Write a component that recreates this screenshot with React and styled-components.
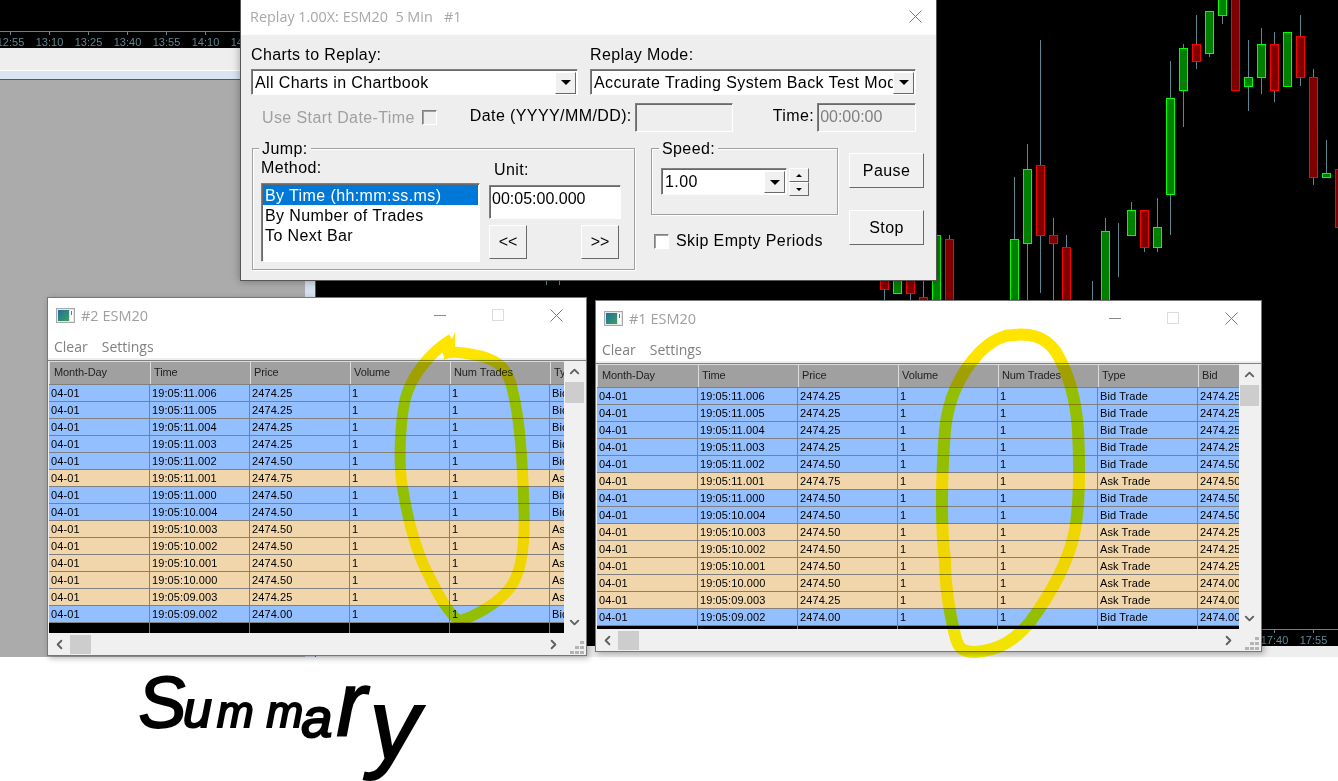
import React from 'react'
import styled, { createGlobalStyle } from 'styled-components'
import { ChevronUp, ChevronDown, ChevronLeft, ChevronRight } from 'lucide-react'

const GlobalStyle = createGlobalStyle`
    html, body {
        margin: 0;
        padding: 0;
        background: #fff;
    }
    body {
        font-family: "Liberation Sans", Arial, sans-serif;
    }
`

const WICK = '#5d8791'
const INK = '#ffe400'

const CANDLES = [
    { i: -30, wick: [278, 285] },
    { i: -29, wick: [278, 285] },
    { i: -4, body: [270, 290], wick: [270, 310] },
    { i: -3, body: [270, 294], up: true },
    { i: -2, body: [270, 294], wick: [270, 310] },
    { i: -1, body: [297, 310], wick: [270, 310] },
    { i: 0, body: [235, 310], wick: [231, 310], up: true },
    { i: 1, body: [239, 310], wick: [235, 310] },
    { i: 6, body: [239, 310], wick: [177, 310], up: true },
    { i: 7, body: [169, 244], wick: [144, 310], up: true },
    { i: 8, body: [165, 236], wick: [40, 293] },
    { i: 9, body: [235, 244], wick: [218, 310] },
    { i: 10, body: [247, 310], wick: [235, 310] },
    { i: 12, wick: [281, 310] },
    { i: 13, body: [231, 310], wick: [218, 310], up: true },
    { i: 14, body: [231, 231], wick: [223, 277], up: true },
    { i: 15, body: [210, 236], wick: [202, 236], up: true },
    { i: 16, body: [210, 248], wick: [210, 252] },
    { i: 17, body: [227, 248], wick: [198, 252], up: true },
    { i: 18, body: [98, 195], wick: [61, 235], up: true },
    { i: 19, body: [48, 91], wick: [44, 127], up: true },
    { i: 20, body: [44, 62], wick: [15, 69] },
    { i: 21, body: [11, 54], wick: [11, 57], up: true },
    { i: 22, body: [-3, 16], wick: [-3, 24], up: true },
    { i: 23, body: [-3, 91] },
    { i: 24, body: [77, 87], wick: [40, 111], up: true },
    { i: 25, body: [44, 78], wick: [28, 94], up: true },
    { i: 26, body: [44, 91], wick: [32, 102] },
    { i: 27, body: [32, 87], up: true },
    { i: 28, body: [36, 78], wick: [15, 86] },
    { i: 29, body: [77, 178], wick: [69, 185] },
    { i: 30, body: [173, 178], wick: [140, 178], up: true },
    { i: 31, body: [169, 228] },
]

const BID = 'Bid Trade'
const ASK = 'Ask Trade'

const TRADES = [
    ['19:05:11.006', '2474.25', BID, '2474.25'],
    ['19:05:11.005', '2474.25', BID, '2474.25'],
    ['19:05:11.004', '2474.25', BID, '2474.25'],
    ['19:05:11.003', '2474.25', BID, '2474.25'],
    ['19:05:11.002', '2474.50', BID, '2474.50'],
    ['19:05:11.001', '2474.75', ASK, '2474.50'],
    ['19:05:11.000', '2474.50', BID, '2474.50'],
    ['19:05:10.004', '2474.50', BID, '2474.50'],
    ['19:05:10.003', '2474.50', ASK, '2474.25'],
    ['19:05:10.002', '2474.50', ASK, '2474.25'],
    ['19:05:10.001', '2474.50', ASK, '2474.25'],
    ['19:05:10.000', '2474.50', ASK, '2474.00'],
    ['19:05:09.003', '2474.25', ASK, '2474.00'],
    ['19:05:09.002', '2474.00', BID, '2474.00'],
]

const COLUMNS = ['Month-Day', 'Time', 'Price', 'Volume', 'Num Trades', 'Type', 'Bid']

// handwritten note at the bottom, one size and offset per letter
const SCRIPT = [
    { ch: 'S', size: 72, dx: 0, dy: 0, rot: -3 },
    { ch: 'u', size: 52, dx: -3, dy: 0, rot: 0 },
    { ch: 'm', size: 44, dx: 5, dy: 0, rot: 0 },
    { ch: 'm', size: 44, dx: 13, dy: 0, rot: 0 },
    { ch: 'a', size: 56, dx: -2, dy: 10, rot: 0 },
    { ch: 'r', size: 90, dx: 4, dy: 8, rot: 0 },
    { ch: 'y', size: 100, dx: 3, dy: 32, rot: 0 },
]

function ChartCandles() {
    return CANDLES.map(({ i, body, wick, up }) => {
        const cx = 936.5 + 13 * i
        return (
            <g key={i}>
                {wick && <rect x={cx - 0.5} y={wick[0]} width="1" height={wick[1] - wick[0]} fill={WICK} />}
                {body && (
                    <rect
                        x={cx - 4}
                        y={body[0] + 0.5}
                        width="8"
                        height={Math.max(body[1] - body[0] - 1, 0)}
                        fill={up ? '#008000' : '#800000'}
                        stroke={up ? '#00ff00' : '#ff0000'}
                        strokeWidth="1"
                    />
                )}
            </g>
        )
    })
}

function AxisTick({ x, y, label }) {
    return (
        <>
            <rect x={x} y={y} width="1" height="4" fill={WICK} />
            <text x={x + 0.5} y={y + 15} fill={WICK} fontSize="11" textAnchor="middle" fontFamily="Liberation Sans">
                {label}
            </text>
        </>
    )
}

function CloseIcon({ color = '#7a7a7a' }) {
    return (
        <svg width="13" height="13" viewBox="0 0 13 13">
            <path d="M0.5 0.5 L12.5 12.5 M12.5 0.5 L0.5 12.5" stroke={color} strokeWidth="1" fill="none" />
        </svg>
    )
}

function WindowIcon() {
    return (
        <svg width="19" height="15" viewBox="0 0 19 15">
            <defs>
                <linearGradient id="winIconFill" x1="0" y1="0" x2="1" y2="1">
                    <stop offset="0" stopColor="#1f6f9f" />
                    <stop offset="1" stopColor="#3f9f5f" />
                </linearGradient>
            </defs>
            <rect x="0.5" y="0.5" width="18" height="14" fill="#e6e6e6" stroke="#a8a8a8" />
            <rect x="2" y="2" width="11" height="11" fill="url(#winIconFill)" />
            <rect x="14" y="2" width="3" height="11" fill="#ffffff" />
            <rect x="15" y="3" width="1" height="4" fill="#2f8f7f" />
        </svg>
    )
}

function Grip() {
    return (
        <svg width="14" height="13" viewBox="0 0 14 13">
            <g fill="#b4b4b4">
                <rect x="10" y="0" width="4" height="3" />
                <rect x="5" y="5" width="4" height="3" />
                <rect x="10" y="5" width="4" height="3" />
                <rect x="0" y="10" width="4" height="3" />
                <rect x="5" y="10" width="4" height="3" />
                <rect x="10" y="10" width="4" height="3" />
            </g>
        </svg>
    )
}

function TradeWindow({ title, left, top, width, height, columns }) {
    return (
        <Window $left={left} $top={top} $width={width} $height={height}>
            <TitleBar>
                <WindowIcon />
                <WindowTitle>{title}</WindowTitle>
                <WindowControls>
                    <Minimize />
                    <Maximize />
                    <CloseIcon />
                </WindowControls>
            </TitleBar>
            <MenuBar>
                <MenuItem>Clear</MenuItem>
                <MenuItem>Settings</MenuItem>
            </MenuBar>
            <WindowBody>
                <TableArea>
                    <Table>
                        <HeaderRow>
                            {columns.map((c) => <HeaderCell key={c}>{c}</HeaderCell>)}
                        </HeaderRow>
                        {TRADES.map(([time, price, type, bid]) => (
                            <Row key={time} $ask={type === ASK}>
                                {['04-01', time, price, '1', '1', type, bid].slice(0, columns.length).map((v, n) => (
                                    <Cell key={n}>{v}</Cell>
                                ))}
                            </Row>
                        ))}
                        <EmptyRow>
                            {columns.map((c) => <EmptyCell key={c} />)}
                        </EmptyRow>
                    </Table>
                    <VScroll>
                        <ScrollArrow><ChevronUp size={15} strokeWidth={3} /></ScrollArrow>
                        <VThumb />
                        <ScrollSpace />
                        <ScrollArrow><ChevronDown size={15} strokeWidth={3} /></ScrollArrow>
                    </VScroll>
                </TableArea>
                <HScroll>
                    <ScrollArrow><ChevronLeft size={15} strokeWidth={3} /></ScrollArrow>
                    <HThumb />
                    <ScrollSpace />
                    <ScrollArrow><ChevronRight size={15} strokeWidth={3} /></ScrollArrow>
                    <GripCorner><Grip /></GripCorner>
                </HScroll>
            </WindowBody>
        </Window>
    )
}

export default function App() {
    return (
        <Desktop>
            <GlobalStyle />
            <Backdrop>
                <LeftPanel>
                    <AxisStrip>
                        <svg width="316" height="48" viewBox="0 0 316 48">
                            <rect x="0" y="31" width="316" height="1" fill={WICK} />
                            {['12:55', '13:10', '13:25', '13:40', '13:55', '14:10', '14:25'].map((t, n) => (
                                <AxisTick key={t} x={10 + 39 * n} y={31} label={t} />
                            ))}
                        </svg>
                    </AxisStrip>
                    <ToolStrip />
                    <TabStrip />
                    <GrayRow>
                        <GrayArea />
                        <BlueEdge />
                    </GrayRow>
                </LeftPanel>
                <ChartPanel>
                    <svg width="1022" height="646" viewBox="316 0 1022 646">
                        <ChartCandles />
                        <rect x="1100" y="629" width="238" height="1" fill={WICK} />
                        <AxisTick x={1274} y={629} label="17:40" />
                        <AxisTick x={1313} y={629} label="17:55" />
                    </svg>
                    <ChartFooter />
                </ChartPanel>
            </Backdrop>

            <Dialog>
                <DialogTitle>
                    <DialogCaption>{'Replay 1.00X: ESM20  5 Min   #1'}</DialogCaption>
                    <CloseIcon />
                </DialogTitle>
                <DialogBody>
                    <FieldRow>
                        <Field $width={327}>
                            <Label>Charts to Replay:</Label>
                            <Combo>
                                <ComboText>All Charts in Chartbook</ComboText>
                                <DropButton><Arrow /></DropButton>
                            </Combo>
                        </Field>
                        <Field $width={326}>
                            <Label>Replay Mode:</Label>
                            <Combo>
                                <ComboText>Accurate Trading System Back Test Mode</ComboText>
                                <DropButton><Arrow /></DropButton>
                            </Combo>
                        </Field>
                    </FieldRow>
                    <DateRow>
                        <DisabledLabel>Use Start Date-Time</DisabledLabel>
                        <CheckBox $disabled $left={7} />
                        <RaisedLabel $left={33}>Date (YYYY/MM/DD):</RaisedLabel>
                        <TextBox $disabled $width={98} $left={3} />
                        <RaisedLabel $left={40}>Time:</RaisedLabel>
                        <TextBox $disabled $width={99} $left={3}>00:00:00</TextBox>
                    </DateRow>
                    <ControlsRow>
                        <Group $width={383} $height={122} $left={1}>
                            <GroupLegend $left={6}>Jump:</GroupLegend>
                            <MethodColumn>
                                <Label>Method:</Label>
                                <ListBox>
                                    <ListItem $selected>By Time (hh:mm:ss.ms)</ListItem>
                                    <ListItem>By Number of Trades</ListItem>
                                    <ListItem>To Next Bar</ListItem>
                                </ListBox>
                            </MethodColumn>
                            <UnitColumn>
                                <UnitLabel>Unit:</UnitLabel>
                                <TextBox $width={132} $height={34}>00:05:00.000</TextBox>
                                <JumpButtons>
                                    <SmallButton>{'<<'}</SmallButton>
                                    <SmallButton>{'>>'}</SmallButton>
                                </JumpButtons>
                            </UnitColumn>
                        </Group>
                        <SpeedColumn>
                            <Group $width={187} $height={67}>
                                <GroupLegend $left={7}>Speed:</GroupLegend>
                                <SpeedRow>
                                    <SpeedCombo>
                                        <ComboText>1.00</ComboText>
                                        <DropButton><Arrow /></DropButton>
                                    </SpeedCombo>
                                    <Spinner>
                                        <SpinButton><SmallArrow $up /></SpinButton>
                                        <SpinButton><SmallArrow /></SpinButton>
                                    </Spinner>
                                </SpeedRow>
                            </Group>
                            <SkipRow>
                                <CheckBox />
                                <Label>Skip Empty Periods</Label>
                            </SkipRow>
                        </SpeedColumn>
                        <ActionColumn>
                            <ActionButton>Pause</ActionButton>
                            <ActionButton>Stop</ActionButton>
                        </ActionColumn>
                    </ControlsRow>
                </DialogBody>
            </Dialog>

            <TradeWindow title="#2 ESM20" left={47} top={297} width={540} height={359} columns={COLUMNS.slice(0, 6)} />
            <TradeWindow title="#1 ESM20" left={595} top={300} width={667} height={352} columns={COLUMNS} />

            <InkLayer width="1338" height="781" viewBox="0 0 1338 781">
                <path d="M443 361 L455 332 L455 349 Z" fill={INK} />
                <path
                    d="M452 339 C430 352 411 376 405 400 C400 425 398 465 403 490 C407 515 415 550 430 578 C440 598 448 612 459 621 C475 616 500 603 512 585 C523 568 525 540 524 510 C523 470 520 420 513 392 C508 365 495 358 470 354 C460 352 452 351 443 354"
                    fill="none" stroke={INK} strokeWidth="11"
                />
                <path
                    d="M1004 336 C1030 332 1045 336 1056 352 C1068 372 1076 400 1078 430 C1080 470 1080 500 1075 530 C1068 565 1050 595 1030 622 C1015 640 1000 650 975 652 C962 652 958 648 955 635 C950 615 945 590 945 560 C941 530 941 480 945 430 C948 400 958 375 980 352 C990 342 998 338 1006 336"
                    fill="none" stroke={INK} strokeWidth="12"
                />
            </InkLayer>

            <Scribble>
                {SCRIPT.map((l, n) => (
                    <ScribbleLetter key={n} $size={l.size} $dx={l.dx} $dy={l.dy} $rot={l.rot}>{l.ch}</ScribbleLetter>
                ))}
            </Scribble>
        </Desktop>
    )
}

const Desktop = styled.div`
    position: relative;
    width: 1338px;
    height: 781px;
    overflow: hidden;
    background: #fff;
`

const Backdrop = styled.div`
    display: flex;
    height: 657px;
`

const LeftPanel = styled.div`
    width: 316px;
    display: flex;
    flex-direction: column;
`

const AxisStrip = styled.div`
    height: 48px;
    background: #000;

    svg {
        display: block;
    }
`

const ToolStrip = styled.div`
    height: 22px;
    background: #eeeeee;
    border-bottom: 1px solid #fff;
`

const TabStrip = styled.div`
    height: 8px;
    background: #d9e5f3;
    border-bottom: 1px solid #5a5a5a;
`

const GrayRow = styled.div`
    flex: 1;
    display: flex;
`

const GrayArea = styled.div`
    width: 305px;
    background: #ababab;
`

const BlueEdge = styled.div`
    width: 10px;
    background: #d5e0ee;
    border-right: 1px solid #555;
`

const ChartPanel = styled.div`
    flex: 1;
    display: flex;
    flex-direction: column;
    background: #000;

    svg {
        display: block;
    }
`

const ChartFooter = styled.div`
    height: 11px;
    background: #eeeeee;
`

const Dialog = styled.div`
    position: absolute;
    left: 240px;
    top: 0;
    width: 695px;
    height: 280px;
    border: 1px solid #555;
    border-top: none;
    background: #eeeeee;
    box-shadow: 0 0 8px rgba(0, 0, 0, 0.35);
    color: #000;
    font-size: 16px;
    letter-spacing: 0.4px;
`

const DialogTitle = styled.div`
    height: 35px;
    display: flex;
    align-items: center;
    justify-content: space-between;
    padding: 0 14px 3px 9px;
    box-sizing: border-box;
    background: #fff;
    letter-spacing: 0;
`

const DialogCaption = styled.span`
    font-family: "Open Sans", sans-serif;
    font-size: 14.4px;
    color: #a8a8a8;
    white-space: pre;
`

const DialogBody = styled.div`
    padding: 11px 0 0 10px;
`

const FieldRow = styled.div`
    display: flex;
    gap: 12px;
`

const Field = styled.div`
    width: ${(p) => p.$width}px;
    display: flex;
    flex-direction: column;
    gap: 5px;
`

const Label = styled.div`
    line-height: 18px;
    white-space: nowrap;
`

const Combo = styled.div`
    height: 26px;
    box-sizing: border-box;
    display: flex;
    align-items: center;
    background: #fff;
    border: 1px solid;
    border-color: #808080 #fff #fff #808080;
    box-shadow: inset 1px 1px 0 #696969;
    padding-right: 1px;
`

const ComboText = styled.span`
    flex: 1;
    min-width: 0;
    padding: 1px 0 0 3px;
    overflow: hidden;
    white-space: nowrap;
`

const DropButton = styled.div`
    width: 21px;
    height: 22px;
    box-sizing: border-box;
    display: flex;
    align-items: center;
    justify-content: center;
    flex-shrink: 0;
    margin-top: 1px;
    background: #f0f0f0;
    border: 1px solid;
    border-color: #fff #696969 #696969 #fff;
`

const Arrow = styled.i`
    width: 0;
    height: 0;
    border-left: 5px solid transparent;
    border-right: 5px solid transparent;
    border-top: 5px solid #000;
`

const DateRow = styled.div`
    display: flex;
    align-items: center;
    height: 29px;
    margin-top: 8px;
    padding-left: 11px;
`

const DisabledLabel = styled.span`
    color: #a0a0a0;
    white-space: nowrap;
`

const RaisedLabel = styled.span`
    margin-left: ${(p) => p.$left}px;
    margin-bottom: 3px;
    white-space: nowrap;
`

const CheckBox = styled.div`
    width: 15px;
    height: 15px;
    box-sizing: border-box;
    flex-shrink: 0;
    margin-left: ${(p) => p.$left || 0}px;
    margin-bottom: ${(p) => (p.$disabled ? '1px' : '0')};
    background: ${(p) => (p.$disabled ? '#eeeeee' : '#fff')};
    border: 1px solid;
    border-color: #808080 #fff #fff #808080;
    box-shadow: inset 1px 1px 0 #a0a0a0;
`

const TextBox = styled.div`
    width: ${(p) => p.$width}px;
    height: ${(p) => p.$height || 29}px;
    box-sizing: border-box;
    flex-shrink: 0;
    margin-left: ${(p) => p.$left || 0}px;
    padding: 3px 0 0 2px;
    line-height: 20px;
    letter-spacing: 0;
    background: ${(p) => (p.$disabled ? '#eeeeee' : '#fff')};
    color: ${(p) => (p.$disabled ? '#808080' : '#000')};
    border: 1px solid;
    border-color: #808080 #fff #fff #808080;
    box-shadow: inset 1px 1px 0 #696969;
`

const ControlsRow = styled.div`
    display: flex;
    align-items: flex-start;
    margin-top: 16px;
`

const Group = styled.div`
    position: relative;
    display: flex;
    box-sizing: border-box;
    width: ${(p) => p.$width}px;
    height: ${(p) => p.$height}px;
    margin-left: ${(p) => p.$left || 0}px;
    border: 1px solid #a0a0a0;
    box-shadow: 1px 1px 0 #fff, inset 1px 1px 0 #fff;
`

const GroupLegend = styled.span`
    position: absolute;
    left: ${(p) => p.$left}px;
    top: -9px;
    padding: 0 3px;
    line-height: 18px;
    background: #eeeeee;
`

const MethodColumn = styled.div`
    display: flex;
    flex-direction: column;
    gap: 6px;
    margin: 10px 0 0 8px;
`

const ListBox = styled.div`
    width: 219px;
    height: 79px;
    box-sizing: border-box;
    padding: 1px 1px 0 1px;
    background: #fff;
    border: 1px solid;
    border-color: #808080 #fff #fff #808080;
    box-shadow: inset 1px 1px 0 #696969;
`

const ListItem = styled.div`
    height: 20px;
    line-height: 21px;
    padding-left: 2px;
    background: ${(p) => (p.$selected ? '#0078d7' : 'transparent')};
    color: ${(p) => (p.$selected ? '#fff' : '#000')};
`

const UnitColumn = styled.div`
    display: flex;
    flex-direction: column;
    margin: 12px 0 0 9px;
`

const UnitLabel = styled(Label)`
    margin: 0 0 6px 5px;
`

const JumpButtons = styled.div`
    display: flex;
    justify-content: space-between;
    width: 130px;
    margin-top: 6px;
`

const Raised = styled.div`
    box-sizing: border-box;
    display: flex;
    align-items: center;
    justify-content: center;
    background: #f0f0f0;
    border: 1px solid;
    border-color: #fff #696969 #696969 #fff;
`

const SmallButton = styled(Raised)`
    width: 38px;
    height: 34px;
    font-size: 16px;
    letter-spacing: 0;
`

const SpeedColumn = styled.div`
    display: flex;
    flex-direction: column;
    margin-left: 16px;
`

const SpeedRow = styled.div`
    display: flex;
    gap: 2px;
    margin: 19px 0 0 9px;
`

const SpeedCombo = styled(Combo)`
    width: 126px;
    height: 27px;
`

const Spinner = styled.div`
    display: flex;
    flex-direction: column;
    width: 20px;
    height: 28px;
`

const SpinButton = styled(Raised)`
    flex: 1;
`

const SmallArrow = styled.i`
    width: 0;
    height: 0;
    border-left: 3px solid transparent;
    border-right: 3px solid transparent;
    border-top: ${(p) => (p.$up ? 'none' : '3px solid #000')};
    border-bottom: ${(p) => (p.$up ? '3px solid #000' : 'none')};
`

const SkipRow = styled.div`
    display: flex;
    align-items: center;
    gap: 7px;
    margin: 17px 0 0 3px;
`

const ActionColumn = styled.div`
    display: flex;
    flex-direction: column;
    gap: 22px;
    margin: 5px 0 0 11px;
`

const ActionButton = styled(Raised)`
    width: 75px;
    height: 35px;
`

const Window = styled.div`
    position: absolute;
    left: ${(p) => p.$left}px;
    top: ${(p) => p.$top}px;
    width: ${(p) => p.$width}px;
    height: ${(p) => p.$height}px;
    box-sizing: border-box;
    display: flex;
    flex-direction: column;
    background: #fff;
    border: 1px solid #777;
    box-shadow: 2px 2px 6px rgba(0, 0, 0, 0.3);
`

const TitleBar = styled.div`
    height: 36px;
    flex-shrink: 0;
    display: flex;
    align-items: center;
    padding: 0 23px 2px 8px;
    box-sizing: border-box;
`

const WindowTitle = styled.span`
    margin-left: 6px;
    font-family: "Open Sans", sans-serif;
    font-size: 14.5px;
    color: #a0a0a0;
`

const WindowControls = styled.div`
    margin-left: auto;
    display: flex;
    align-items: center;
    gap: 46px;
`

const Minimize = styled.i`
    width: 12px;
    height: 1px;
    background: #888;
`

const Maximize = styled.i`
    width: 12px;
    height: 12px;
    box-sizing: border-box;
    border: 1px solid #dcdcdc;
`

const MenuBar = styled.div`
    height: 26px;
    flex-shrink: 0;
    display: flex;
    align-items: center;
    gap: 14px;
    padding-left: 6px;
    border-bottom: 2px solid #eeeeee;
    box-sizing: border-box;
`

const MenuItem = styled.span`
    font-family: "Open Sans", sans-serif;
    font-size: 14px;
    color: #808080;
`

const WindowBody = styled.div`
    flex: 1;
    min-height: 0;
    display: flex;
    flex-direction: column;
    padding: 0 1px 0 1px;
    background: #f0f0f0;
    border-top: 1px solid #808080;
`

const TableArea = styled.div`
    flex: 1;
    min-height: 0;
    display: flex;
`

const Table = styled.div`
    flex: 1;
    min-width: 0;
    display: flex;
    flex-direction: column;
    overflow: hidden;
    background: #000;
    font-size: 11px;
    color: #000;
`

const HeaderRow = styled.div`
    display: flex;
    flex-shrink: 0;
    height: 24px;
    background: #a0a0a0;
    border-bottom: 1px solid #808080;
    box-sizing: border-box;
`

const HeaderCell = styled.div`
    width: 100px;
    flex-shrink: 0;
    box-sizing: border-box;
    padding-left: 4px;
    line-height: 23px;
    letter-spacing: -0.1px;
    color: #222;
    white-space: nowrap;
    box-shadow: inset 1px 1px 0 #dcdcdc;

    &:first-child {
        width: 101px;
        padding-left: 5px;
    }
`

const Row = styled.div`
    display: flex;
    flex-shrink: 0;
    height: 17px;
    box-sizing: border-box;
    background: ${(p) => (p.$ask ? '#f0d6aa' : '#94bfff')};
    border-bottom: 1px solid #808080;
`

const Cell = styled.div`
    width: 100px;
    flex-shrink: 0;
    box-sizing: border-box;
    padding-left: 2px;
    line-height: 17px;
    letter-spacing: 0.1px;
    white-space: nowrap;
    border-right: 1px solid #808080;

    &:first-child {
        width: 101px;
    }
`

const EmptyRow = styled.div`
    flex: 1;
    display: flex;
`

const EmptyCell = styled.div`
    width: 100px;
    flex-shrink: 0;
    box-sizing: border-box;
    border-right: 1px solid #808080;

    &:first-child {
        width: 101px;
    }
`

const VScroll = styled.div`
    width: 21px;
    flex-shrink: 0;
    display: flex;
    flex-direction: column;
    align-items: center;
    background: #f0f0f0;
`

const ScrollArrow = styled.div`
    width: 21px;
    height: 21px;
    flex-shrink: 0;
    display: flex;
    align-items: center;
    justify-content: center;
    color: #606060;
`

const ScrollSpace = styled.div`
    flex: 1;
`

const VThumb = styled.div`
    width: 19px;
    height: 21px;
    flex-shrink: 0;
    background: #cdcdcd;
`

const HScroll = styled.div`
    height: 22px;
    flex-shrink: 0;
    display: flex;
    align-items: center;
    background: #f0f0f0;
`

const HThumb = styled.div`
    width: 21px;
    height: 19px;
    flex-shrink: 0;
    background: #cdcdcd;
`

const GripCorner = styled.div`
    width: 21px;
    height: 22px;
    display: flex;
    align-items: flex-end;
    justify-content: flex-end;
    padding: 0 1px 1px 0;
    box-sizing: border-box;
`

const InkLayer = styled.svg`
    position: absolute;
    left: 0;
    top: 0;
    mix-blend-mode: darken;
    pointer-events: none;
`

const Scribble = styled.div`
    position: absolute;
    left: 138px;
    top: 642px;
    display: flex;
    align-items: baseline;
    font-family: "Liberation Sans", sans-serif;
    font-style: italic;
    color: #000;
    -webkit-text-stroke: 2px #000;
    line-height: 1;
`

const ScribbleLetter = styled.span`
    display: inline-block;
    font-size: ${(p) => p.$size}px;
    margin-left: ${(p) => p.$dx}px;
    transform: translateY(${(p) => p.$dy}px) rotate(${(p) => p.$rot}deg);
`
